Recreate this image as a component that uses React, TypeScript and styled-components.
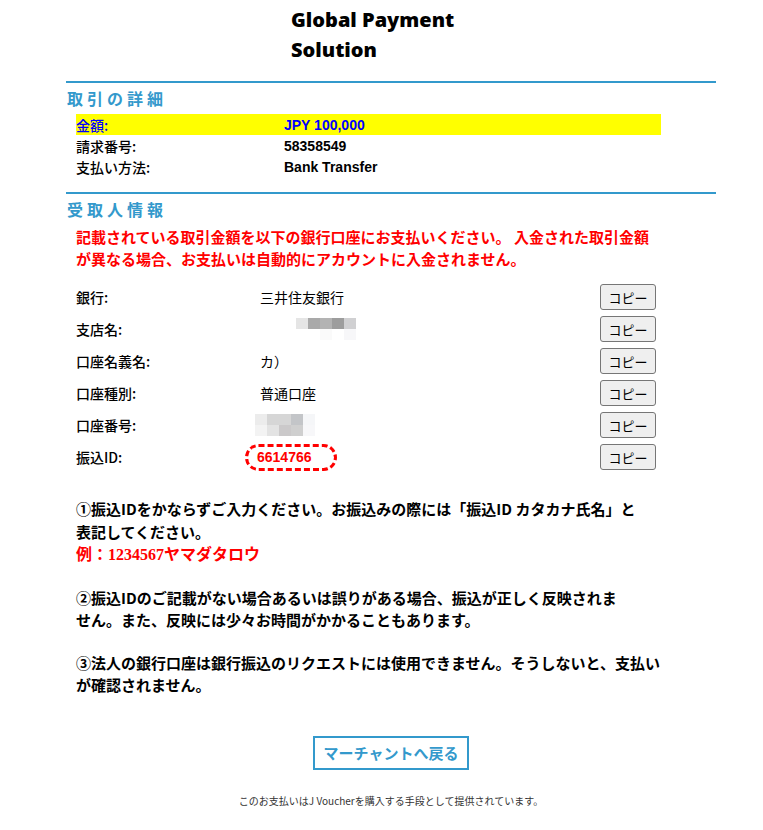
import React from "react"
import styled, { createGlobalStyle } from "styled-components"

const GlobalStyle = createGlobalStyle`
    body {
        margin: 0;
        background: #fff;
        font-family: "Liberation Sans", "Noto Sans CJK JP", sans-serif;
        color: #000;
    }
`

const Page = styled.div`
    width: 650px;
    margin-left: 66px;
`

const Header = styled.header`
    padding: 5px 0 0 225px;
    margin-bottom: 16px;
`

const Title = styled.h1`
    margin: 0;
    width: 180px;
    font-family: "Open Sans", "Noto Sans", sans-serif;
    font-size: 20px;
    font-weight: 800;
    line-height: 30px;
`

const Section = styled.section`
    border-top: 2px solid #3399cc;
`

const SectionHeading = styled.h2`
    margin: 4px 0 0 1px;
    font-family: "Noto Sans CJK JP", sans-serif;
    font-size: 16px;
    font-weight: 700;
    line-height: 22px;
    letter-spacing: 4px;
    color: #3399cc;
`

const InfoTable = styled.div`
    width: 585px;
    margin: 5px 0 15px 10px;
`

const InfoRow = styled.div<{ $highlight?: boolean }>`
    display: grid;
    grid-template-columns: 208px 1fr;
    height: 21px;
    align-items: center;
    font-size: 14px;
    background: ${(p) => (p.$highlight ? "#ffff00" : "transparent")};
    color: ${(p) => (p.$highlight ? "#0000ff" : "#000")};
`

const InfoLabel = styled.span`
    font-family: "Noto Sans CJK JP", sans-serif;
    font-weight: 500;
`

const InfoValue = styled.span`
    font-weight: 700;
`

const Notice = styled.p`
    margin: 6px 0 0 10px;
    font-family: "Noto Sans CJK JP", sans-serif;
    font-size: 15px;
    font-weight: 700;
    line-height: 22px;
    color: #ff0000;
`

const BankTable = styled.div`
    width: 580px;
    margin: 11px 0 0 10px;
`

const BankRow = styled.div`
    display: grid;
    grid-template-columns: 184px 1fr 56px;
    height: 32px;
    align-items: center;
    font-size: 14px;
`

const BankLabel = styled.span`
    font-family: "Noto Sans CJK JP", sans-serif;
    font-weight: 500;
`

const BankValue = styled.span`
    font-family: "Noto Sans CJK JP", sans-serif;
    display: flex;
    align-items: center;
`

const CopyButton = styled.button`
    width: 56px;
    height: 26px;
    padding: 0;
    font-family: "Noto Sans CJK JP", sans-serif;
    font-size: 13px;
    color: #000;
    background: #efefef;
    border: 1px solid #767676;
    border-radius: 3px;
`

const IdBox = styled.span`
    margin-left: -15px;
    display: inline-flex;
    align-items: center;
    width: 92px;
    height: 27px;
    box-sizing: border-box;
    padding-left: 9px;
    border: 3px dashed #ff0000;
    border-radius: 14px;
    color: #ff0000;
    font-family: "Liberation Sans", sans-serif;
    font-weight: 700;
    font-size: 14px;
`

const Blur = styled.span<{ $offset: number; $cols: number }>`
    display: grid;
    grid-template-columns: repeat(${(p) => p.$cols}, 12px);
    grid-auto-rows: 11px;
    margin-left: ${(p) => p.$offset}px;
`

const BlurCell = styled.span<{ $c: string }>`
    background: ${(p) => p.$c};
`

const Notes = styled.div`
    margin: 25px 0 0 10px;
    font-family: "Noto Sans CJK JP", sans-serif;
    font-size: 15px;
    font-weight: 700;
    line-height: 22.5px;
`

const NoteParagraph = styled.p`
    margin: 0 0 20px;
`

const Example = styled.span`
    color: #ff0000;
    font-family: "Liberation Serif", "Noto Sans CJK JP", serif;
    font-size: 16px;
`

const Actions = styled.div`
    display: flex;
    justify-content: center;
    margin-top: 39px;
`

const BackButton = styled.a`
    display: inline-flex;
    align-items: center;
    justify-content: center;
    width: 156px;
    height: 34px;
    box-sizing: border-box;
    border: 2px solid #3399cc;
    color: #3399cc;
    font-family: "Noto Sans CJK JP", sans-serif;
    font-size: 15px;
    font-weight: 700;
    text-decoration: none;
`

const Footer = styled.p`
    margin: 23px 0 0;
    text-align: center;
    font-family: "Noto Sans CJK JP", sans-serif;
    font-size: 10px;
    line-height: 16px;
    color: #333;
`

const branchBlur = [
    "#e5e5e5", "#a9a9a9", "#b3b3b3", "#9d9d9d", "#d0d0d2", "#ffffff",
    "#ffffff", "#ffffff", "#fafafa", "#ffffff", "#f7f7f9", "#ffffff",
]

const numberBlur = [
    "#ececec", "#d6d6d6", "#d6d6d6", "#c3c5c8", "#f5f6f8", "#ffffff",
    "#f3f3f3", "#e3e3e3", "#cbc9ca", "#cfcfcf", "#f7f7f9", "#ffffff",
]

const Redacted = ({ cells, offset }: { cells: string[]; offset: number }) => (
    <Blur $offset={offset} $cols={6}>
        {cells.map((c, i) => (
            <BlurCell key={i} $c={c} />
        ))}
    </Blur>
)

const bankRows: { label: string; value: React.ReactNode }[] = [
    { label: "銀行:", value: "三井住友銀行" },
    { label: "支店名:", value: <Redacted cells={branchBlur} offset={36} /> },
    { label: "口座名義名:", value: "カ）" },
    { label: "口座種別:", value: "普通口座" },
    { label: "口座番号:", value: <Redacted cells={numberBlur} offset={-5} /> },
    { label: "振込ID:", value: <IdBox>6614766</IdBox> },
]

export default function App() {
    return (
        <>
            <GlobalStyle />
            <Page>
                <Header>
                    <Title>Global Payment Solution</Title>
                </Header>

                <Section>
                    <SectionHeading>取引の詳細</SectionHeading>
                    <InfoTable>
                        <InfoRow $highlight>
                            <InfoLabel>金額:</InfoLabel>
                            <InfoValue>JPY 100,000</InfoValue>
                        </InfoRow>
                        <InfoRow>
                            <InfoLabel>請求番号:</InfoLabel>
                            <InfoValue>58358549</InfoValue>
                        </InfoRow>
                        <InfoRow>
                            <InfoLabel>支払い方法:</InfoLabel>
                            <InfoValue>Bank Transfer</InfoValue>
                        </InfoRow>
                    </InfoTable>
                </Section>

                <Section>
                    <SectionHeading>受取人情報</SectionHeading>
                    <Notice>
                        記載されている取引金額を以下の銀行口座にお支払いください。 入金された取引金額
                        <br />
                        が異なる場合、お支払いは自動的にアカウントに入金されません。
                    </Notice>
                    <BankTable>
                        {bankRows.map((row) => (
                            <BankRow key={row.label}>
                                <BankLabel>{row.label}</BankLabel>
                                <BankValue>{row.value}</BankValue>
                                <CopyButton>コピー</CopyButton>
                            </BankRow>
                        ))}
                    </BankTable>

                    <Notes>
                        <NoteParagraph>
                            ①振込IDをかならずご入力ください。お振込みの際には「振込ID カタカナ氏名」と
                            <br />
                            表記してください。
                            <br />
                            <Example>例：1234567ヤマダタロウ</Example>
                        </NoteParagraph>
                        <NoteParagraph>
                            ②振込IDのご記載がない場合あるいは誤りがある場合、振込が正しく反映されま
                            <br />
                            せん。また、反映には少々お時間がかかることもあります。
                        </NoteParagraph>
                        <NoteParagraph>
                            ③法人の銀行口座は銀行振込のリクエストには使用できません。そうしないと、支払い
                            <br />
                            が確認されません。
                        </NoteParagraph>
                    </Notes>
                </Section>

                <Actions>
                    <BackButton href="#">マーチャントへ戻る</BackButton>
                </Actions>
                <Footer>このお支払いはJ Voucherを購入する手段として提供されています。</Footer>
            </Page>
        </>
    )
}
